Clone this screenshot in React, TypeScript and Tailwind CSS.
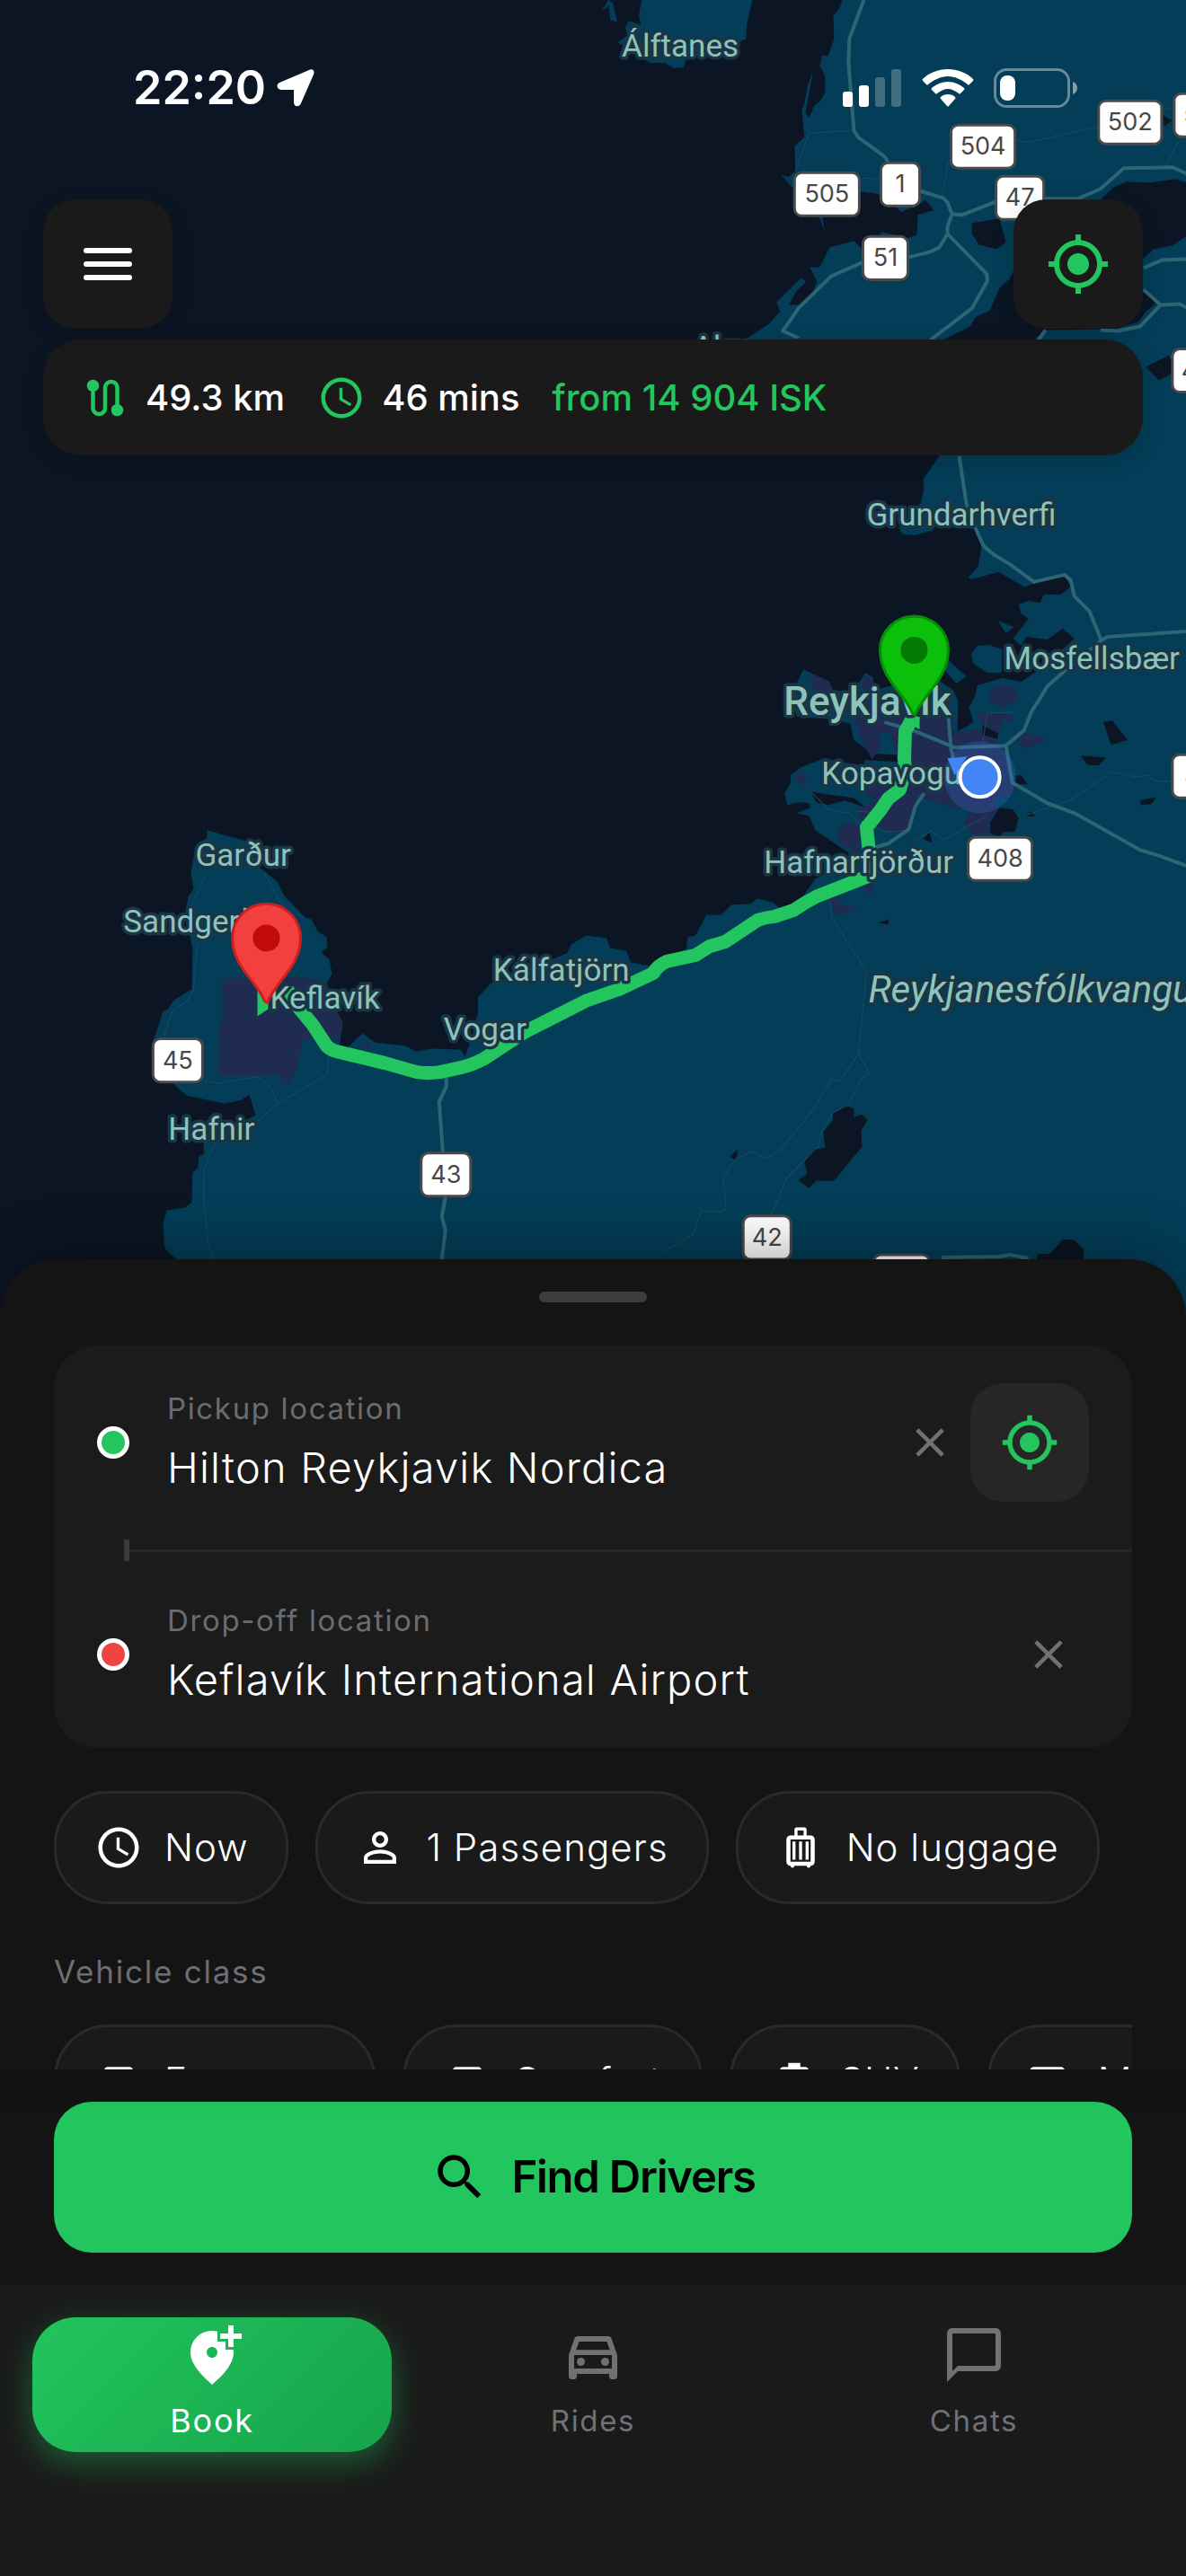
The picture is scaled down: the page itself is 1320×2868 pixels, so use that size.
import type { ReactNode } from "react";
import type { IconType } from "react-icons";
import {
  MdAddLocationAlt,
  MdAirportShuttle,
  MdChatBubbleOutline,
  MdClose,
  MdLocalTaxi,
  MdMyLocation,
  MdOutlineDirectionsCar,
  MdOutlineLuggage,
  MdPersonOutline,
  MdRoute,
  MdSchedule,
  MdSearch,
} from "react-icons/md";

// ---------- Map data ----------

const LAND = [
  // mainland, clockwise from the top
  "M937 0 934 9 927 17 928 43 921 63 915 61 912 73 918 85 918 103 912 113 906 117 900 131 896 125 899 110 905 77 898 97 895 115 892 123 895 152 884 163 885 190 877 197 869 194 912 243 918 258 915 242 957 213 980 216 997 230 1002 236 1022 228 1029 222 1039 234 1021 239 1020 261 1009 265 982 258 959 277 950 268 923 275 912 297 901 297 909 313 904 325 889 339 878 339 885 325 897 313 891 309 864 336 868 346 856 360 833 375 820 390 900 430 1020 410 1051 377 1079 363 1085 353 1101 345 1112 320 1123 310 1128 300 1160 250 1224 222 1239 208 1253 202 1279 203 1308 199 1320 203V0Z",
  "M1320 262 1304 273 1283 277 1272 287 1240 310 1272 323 1286 337 1274 347 1266 358 1240 366 1163 367 1150 378 1100 430 1045 507 1027 533 1028 543 1024 560 1000 587 1004 594 1018 595 1037 590 1041 585 1086 587 1092 608 1088 630 1077 642 1081 644 1111 636 1140 653 1152 647 1184 640 1191 652 1180 661 1161 661 1157 670 1144 668 1133 672 1136 682 1144 688 1127 710 1136 718 1142 708 1165 711 1182 699 1195 710 1175 728 1152 747 1136 758 1115 754 1087 762 1085 773 1078 787 1083 802 1077 807 1065 813 1066 780 1060 767 1039 753 1000 760 974 767 971 753 963 748 948 770 927 767 922 758 894 744 887 758 880 780 887 797 929 800 946 805 950 823 971 838 997 839 999 847 961 845 963 852 917 843 891 853 879 862 880 870 873 882 876 895 889 892 900 893 902 898 886 904 900 907 907 923 929 938 946 950 929 967 907 977 891 1000 870 1012 861 1004 843 999 835 1005 814 1006 803 1017 786 1017 774 1040 765 1042 764 1055 723 1074 702 1070 697 1057 679 1054 675 1043 660 1041 652 1040 636 1050 631 1060 606 1070 547 1093 532 1109 532 1127 526 1150 518 1175 513 1167 480 1166 463 1169 452 1163 417 1159 404 1149 387 1165 378 1163 382 1138 377 1127 364 1093 370 1083 367 1067 358 1059 365 1053 364 1042 354 1035 347 1022 340 1020 316 995 309 980 290 965 274 935 231 923 231 932 219 940 213 970 216 988 210 997 207 1015 215 1055 214 1100 194 1112 187 1123 182 1124 175 1147 170 1160 169 1170 197 1208 208 1218 251 1227 269 1223 278 1217 285 1240 274 1245 227 1270 228 1283 222 1285 221 1298 215 1304 214 1337 206 1343 186 1346 182 1362 184 1388 196 1399V1480H1320Z",
  // islands and peninsulas
  "M714 0H837L831 27 830 43 816 50 763 67 761 75 750 76 740 70 723 70 687 47 698 40 696 30 700 23 713 28 711 17Z",
  "M669 13 677 0 682 3 687 25 679 22 678 6Z",
  "M1080 727 1087 718 1100 717 1115 722 1114 748 1098 748 1083 738Z",
  "M1110 690 1128 697 1119 704Z",
  "M1054 733 1075 752 1064 760 1049 743Z",
];

const WATER = [
  "M1081 248 1112 243 1119 270 1108 277 1089 272 1081 260Z",
  "M1274 408 1300 395 1308 413 1289 423Z",
  "M1293 128 1304 134 1295 140Z",
  "M1227 803 1237 801 1254 823 1236 828Z",
  "M1202 840 1230 842 1222 851 1209 850Z",
  "M1268 890 1286 886 1281 894 1269 895Z",
  "M1139 907 1148 902 1151 908Z",
  "M1101 915 1112 898 1127 900 1133 910 1129 925 1116 925 1112 930 1102 927Z",
  "M1027 933 1034 925 1037 937Z",
  "M1130 862 1136 862 1143 872 1129 872Z",
  "M902 880 925 884 950 887 963 898 940 890 921 895 908 892Z",
  "M1093 807 1110 815 1110 822 1093 817Z",
  "M942 1229 950 1233 950 1242 959 1239 965 1245 958 1257 959 1275 928 1313 908 1313 900 1321 888 1312 898 1305 895 1292 906 1278 918 1276 916 1258 926 1247 927 1237Z",
  "M812 1286 821 1278 819 1290Z",
  "M976 1026 989 1022 988 1028Z",
  "M1154 1394H1168L1182 1378H1194L1206 1389 1204 1402H1154Z",
];

const URBAN = [
  "M985 770 1055 775 1062 815 1085 810 1110 825 1125 850 1130 880 1105 890 1111 902 1100 912 1100 925 1085 930 1072 915 1080 900 1050 895 1020 885 1016 910 1008 930 985 922 958 912 953 902 975 890 960 880 990 865 1000 845 990 815 955 812 950 800 946 772Z",
  "M902 748 923 758 929 775 905 770Z",
  "M958 765 963 750 971 756 972 770Z",
  "M952 805 978 812 980 830 970 844 960 825Z",
  "M882 866 890 858 899 870 892 873Z",
  "M248 1088 290 1089 335 1086 364 1093 377 1127 382 1138 377 1158 362 1150 337 1158 332 1183 324 1205 314 1204 311 1195 243 1196 245 1138 248 1137Z",
  "M934 920 946 913 958 920 955 950 934 937 931 928Z",
  "M1102 765 1127 761 1133 778 1115 787 1101 780Z",
  "M1087 793 1115 793 1127 797 1125 805 1115 798 1110 820 1093 810Z",
  "M1140 815 1165 822 1140 833 1131 825Z",
  "M923 1000 929 995 938 1007 959 1008 944 1014 929 1017Z",
  "M958 985 972 978 970 996Z",
  "M398 1164 417 1156 410 1166Z",
];

const HIGHWAYS = [
  "M961 0 945 43 944 70 950 145 955 153 984 174 1004 205 1022 212 1049 220 1054 225 1059 238 1054 252 1054 260 1098 305 1098 313 1081 343 1035 378",
  "M1059 238 1070 239 1108 224 1163 221 1199 221 1224 210 1250 187 1304 186 1320 193",
  "M1054 260 1045 275 1035 280 1011 286 959 292 925 307 889 342 871 368 889 376",
  "M1272 298 1293 289 1320 288M1272 322 1291 339 1268 363 1243 368 1224 367M1291 339 1312 338 1320 342M1163 367 1155 378",
  "M1067 507 1075 560 1085 587 1094 607 1106 617 1123 627 1150 647 1184 639 1191 645 1195 663 1212 680 1225 712 1232 708 1320 702",
  "M1225 712 1182 748 1165 763 1159 773 1148 790 1139 812 1119 829 1062 831 1018 813 984 803",
  "M1119 829 1126 870 1165 893 1197 905 1268 945 1291 952 1320 963",
  "M1055 797 1058 833 1064 860M1028 882 1018 897 1011 922 988 938 974 942",
  "M497 1198V1208L489 1225 493 1280 496 1330 492 1353 496 1368 492 1400",
  "M1047 1398 1112 1397 1123 1395 1144 1399",
];

const LANES = [
  "M885 190 900 148 950 145M1130 156 1144 158 1221 141M1293 122 1310 118M1055 180 1048 218M1312 156 1296 184M961 198 979 199",
  "M231 970 210 1015M294 970 316 1010M221 1040 216 1100 210 1112 192 1125 183 1152M228 1202 244 1204 288 1197 304 1212 309 1228 285 1248M366 1165 365 1194 309 1228M240 1270 228 1300 227 1330 232 1380 238 1400",
  "M923 1000 925 1020 964 1080 955 1172 967 1193 957 1201 944 1228 927 1237 914 1258 911 1274 875 1310 866 1333 856 1354",
  "M955 1172 934 1202 925 1200 905 1233 868 1279 851 1288 838 1280 819 1288 805 1310 808 1344 803 1347 780 1347 771 1373 733 1394",
  "M1139 907 1190 890 1220 870 1236 858 1265 864 1275 862 1285 868 1304 869M1096 908 1050 934 1036 924 1018 934M902 880 922 900 944 904 958 918",
  "M953 902 970 903M955 912 985 925 1011 923M1093 828 1098 793 1127 792",
];

const ROUTE =
  "M1017 795 1007 813 1006 843 1007 858 1001 878 988 888 980 900 964 920 967 947 969 973 959 977 908 997Q896 1003 883 1012L862 1019Q852 1020 843 1023L828 1033 807 1047 790 1052 774 1062 742 1069Q732 1073 727 1082L689 1100 660 1110Q652 1112 644 1117L585 1147 539 1177Q526 1184 513 1187L490 1192Q476 1194 464 1192L429 1182 375 1169Q368 1167 364 1163L349 1140 335 1123 320 1100";

type Place = { name: string; x: number; y: number };

const places: Place[] = [
  { name: "Álftanes", x: 692, y: 63 },
  { name: "Akranes", x: 771, y: 398 },
  { name: "Grundarhverfi", x: 964, y: 584 },
  { name: "Mosfellsbær", x: 1117, y: 744 },
  { name: "Kopavogur", x: 914, y: 872 },
  { name: "Hafnarfjörður", x: 850, y: 971 },
  { name: "Garður", x: 218, y: 963 },
  { name: "Sandgerði", x: 138, y: 1037 },
  { name: "Keflavík", x: 301, y: 1121 },
  { name: "Vogar", x: 494, y: 1156 },
  { name: "Kálfatjörn", x: 549, y: 1091 },
  { name: "Hafnir", x: 188, y: 1267 },
];

const shields = [
  { no: "504", x: 1057, y: 138, w: 73 },
  { no: "502", x: 1221, y: 111, w: 72 },
  { no: "503", x: 1305, y: 103, w: 73 },
  { no: "505", x: 883, y: 191, w: 74 },
  { no: "1", x: 979, y: 180, w: 45 },
  { no: "47", x: 1107, y: 195, w: 55 },
  { no: "51", x: 959, y: 262, w: 52 },
  { no: "48", x: 1303, y: 387, w: 56 },
  { no: "431", x: 1303, y: 838, w: 74 },
  { no: "408", x: 1076, y: 930, w: 73 },
  { no: "45", x: 170, y: 1154, w: 57 },
  { no: "43", x: 468, y: 1281, w: 57 },
  { no: "42", x: 826, y: 1351, w: 55 },
  { no: "427", x: 971, y: 1394, w: 64 },
];

function Pin({ x, y, fill, edge, dot }: { x: number; y: number; fill: string; edge: string; dot: string }) {
  return (
    <g transform={`translate(${x} ${y})`}>
      <path
        d="M0-38C21-38 38-21 38 0 38 14 33 25 25 36 14 51 5 61 2 70Q0 73-2 70C-5 61-14 51-25 36-33 25-38 14-38 0-38-21-21-38 0-38Z"
        fill={fill}
        stroke={edge}
        strokeWidth="3"
      />
      <circle r="15" fill={dot} />
    </g>
  );
}

function RouteMap() {
  return (
    <svg
      className="absolute inset-0 h-full w-full font-[Roboto,sans-serif]"
      viewBox="0 0 1320 1464"
      preserveAspectRatio="xMidYMin slice"
      role="img"
      aria-label="Route from Reykjavík to Keflavík"
    >
      <rect width="1320" height="1480" fill="#0c1523" />
      <path d={LAND.join("")} fill="#033d57" />
      <path d={URBAN.join("")} fill="#1f2b50" />
      <path d={WATER.join("")} fill="#0c1523" />
      <path d={LANES.join("")} fill="none" stroke="#1a4a64" strokeWidth="1" />
      <path d={HIGHWAYS.join("")} fill="none" stroke="#2c6675" strokeWidth="4" strokeLinejoin="round" />

      <path d={ROUTE} fill="none" stroke="#22c55e" strokeWidth="15" strokeLinejoin="round" />
      <path d="M287 1101H299V1122L287 1130ZM1013 797H1023V811L1013 806Z" fill="#22c55e" />

      {/* Place names */}
      <g fill="#8ec3b9" stroke="#1a3646" strokeWidth="7" strokeLinejoin="round" paintOrder="stroke" fontSize="35">
        {places.map((p) => (
          <text key={p.name} x={p.x} y={p.y}>
            {p.name}
          </text>
        ))}
        <text x="872" y="795" fontSize="44" fontWeight="500">
          Reykjavík
        </text>
        <text x="966" y="1114" fontSize="42" fontStyle="italic">
          Reykjanesfólkvangur
        </text>
      </g>

      {/* Road numbers */}
      {shields.map((s) => (
        <g key={s.no} className="font-[Inter,sans-serif]">
          <rect x={s.x + 1} y={s.y + 1} width={s.w - 2} height="48" rx="8" fill="#fff" stroke="#4a4a4a" strokeWidth="3" />
          <text x={s.x + s.w / 2} y={s.y + 34} textAnchor="middle" fontSize="27" fill="#484848">
            {s.no}
          </text>
        </g>
      ))}

      {/* Current position */}
      <circle cx="1090" cy="864" r="40" fill="#4285f4" fillOpacity="0.22" />
      <path d="M1054 843 1076 841 1062 862Z" fill="#4285f4" />
      <circle cx="1090" cy="864" r="22" fill="#4285f4" stroke="#fff" strokeWidth="4" />

      <Pin x={1017} y={723} fill="#0bbf0b" edge="#078c07" dot="#047a04" />
      <Pin x={297} y={1043} fill="#f43f3f" edge="#cc1f1f" dot="#c20c0c" />
    </svg>
  );
}

// ---------- Status bar ----------

function StatusBar() {
  return (
    <div className="flex h-[195px] items-center justify-between pr-[120px] pl-[148px] text-white">
      <div className="flex items-center gap-3">
        <span className="text-[52px] leading-none font-semibold">22:20</span>
        <svg className="h-[42px] w-[42px]" viewBox="0 0 42 42" fill="currentColor">
          <path d="M36 1C39-1 43 1 41 6L27 38C25 43 19 42 19 37V23H5C0 23-1 17 3 15Z" />
        </svg>
      </div>
      <div className="flex items-center gap-[22px]">
        <svg className="h-[42px] w-[66px]" viewBox="0 0 66 42" fill="currentColor">
          <rect y="25" width="11" height="17" rx="3" />
          <rect x="18" y="18" width="11" height="24" rx="3" />
          <rect x="36" y="9" width="11" height="33" rx="3" opacity="0.25" />
          <rect x="54" width="11" height="42" rx="3" opacity="0.25" />
        </svg>
        <svg className="h-[42px] w-[58px]" viewBox="0 0 58 42" fill="currentColor">
          <path d="M29 0C40 0 50 4 57 11Q58 12 57 13L53 17Q52 18 51 17C45 12 37 8 29 8S13 12 7 17Q6 18 5 17L1 13Q0 12 1 11C8 4 18 0 29 0Z" />
          <path d="M29 14C36 14 42 17 47 21Q48 22 47 23L43 27Q42 28 41 27C37 24 33 22 29 22S21 24 17 27Q16 28 15 27L11 23Q10 22 11 21C16 17 22 14 29 14Z" />
          <path d="M29 28C32 28 35 29 37 31Q38 32 37 33L30 41Q29 42 28 41L21 33Q20 32 21 31C23 29 26 28 29 28Z" />
        </svg>
        <svg className="h-[44px] w-[94px]" viewBox="0 0 94 44">
          <rect x="1.5" y="1.5" width="82" height="41" rx="13" fill="none" stroke="#fff" strokeOpacity="0.4" strokeWidth="3" />
          <path d="M88 15Q93 17 93 22T88 29Z" fill="#fff" fillOpacity="0.5" />
          <rect x="7" y="8" width="17" height="28" rx="8" fill="#fff" />
        </svg>
      </div>
    </div>
  );
}

// ---------- Overlay controls ----------

function MapButton({ label, children }: { label: string; children: ReactNode }) {
  return (
    <button
      type="button"
      aria-label={label}
      className="flex size-36 items-center justify-center rounded-[36px] bg-[#1a1a1a] shadow-[0_6px_24px_rgba(0,0,0,0.15)]"
    >
      {children}
    </button>
  );
}

function TripSummary() {
  return (
    <div className="mx-12 mt-3 flex h-[129px] items-center rounded-[42px] bg-[#1a1a1a] px-[42px] text-[40px] leading-none font-medium text-white shadow-[0_6px_24px_rgba(0,0,0,0.15)]">
      <MdRoute className="mr-[18px] size-[54px] text-[#22c55e]" />
      <span>49.3 km</span>
      <MdSchedule className="mr-[18px] ml-9 size-[54px] text-[#22c55e]" />
      <span>46 mins</span>
      <span className="ml-9 text-[#22c55e]">from 14 904 ISK</span>
    </div>
  );
}

// ---------- Booking sheet ----------

function LocationRow({
  id,
  label,
  value,
  dotClass,
  children,
}: {
  id: string;
  label: string;
  value: string;
  dotClass: string;
  children?: ReactNode;
}) {
  return (
    <div className="flex items-center px-12 py-[42px]">
      <span className={`size-9 shrink-0 rounded-full border-[5px] border-white ${dotClass}`} />
      <div className="ml-[42px] flex min-w-0 flex-1 flex-col gap-2">
        <label htmlFor={id} className="text-[33px] leading-[48px] tracking-wider text-[#6c6c70]">
          {label}
        </label>
        <input
          id={id}
          type="text"
          defaultValue={value}
          className="h-[68px] w-full bg-transparent p-0 text-[47px] leading-[68px] font-light tracking-wide text-white outline-none"
        />
      </div>
      <button type="button" aria-label={`Clear ${label.toLowerCase()}`} className="flex w-[90px] justify-center text-[#717175]">
        <MdClose className="size-[54px]" />
      </button>
      {children}
    </div>
  );
}

function Chip({ icon: Icon, label }: { icon: IconType; label: string }) {
  return (
    <button
      type="button"
      className="flex h-[126px] shrink-0 items-center gap-6 rounded-[60px] border-3 border-[#2a2a2a] bg-[#1a1a1a] px-[42px] text-[42px] leading-none font-light tracking-wide text-white"
    >
      <Icon className="size-[54px]" />
      {label}
    </button>
  );
}

const tripOptions = [
  { icon: MdSchedule, label: "Now" },
  { icon: MdPersonOutline, label: "1 Passengers" },
  { icon: MdOutlineLuggage, label: "No luggage" },
];

const vehicleClasses = [
  { icon: MdOutlineDirectionsCar, label: "Economy" },
  { icon: MdOutlineDirectionsCar, label: "Comfort" },
  { icon: MdLocalTaxi, label: "SUV" },
  { icon: MdAirportShuttle, label: "Minivan" },
];

function BookingSheet() {
  return (
    <section className="relative -mt-16 rounded-t-[64px] bg-[#141414] px-[60px] pt-9 shadow-[0_-12px_60px_rgba(0,0,0,0.3)]">
      <div className="mx-auto mb-12 h-3 w-[120px] rounded-full bg-[#3c3c3c]" />

      <div className="rounded-[48px] bg-[#1b1b1b]">
        <LocationRow id="pickup" label="Pickup location" value="Hilton Reykjavik Nordica" dotClass="bg-[#22c55e]">
          <button
            type="button"
            aria-label="Use current location"
            className="flex size-[132px] items-center justify-center rounded-[36px] bg-[#262626]"
          >
            <MdMyLocation className="size-[66px] text-[#22c55e]" />
          </button>
        </LocationRow>
        <div className="ml-[78px] flex h-6 items-center">
          <div className="h-6 w-[6px] bg-[#3a3a3a]" />
          <div className="h-[3px] flex-1 bg-[#272727]" />
        </div>
        <LocationRow id="dropoff" label="Drop-off location" value="Keflavík International Airport" dotClass="bg-[#ef4444]" />
      </div>

      <div className="mt-12 flex gap-[30px] overflow-hidden">
        {tripOptions.map((o) => (
          <Chip key={o.label} {...o} />
        ))}
      </div>

      <h2 className="mt-12 mb-8 text-[35px] leading-[54px] tracking-wider text-[#6e6e72]">Vehicle class</h2>
      <div className="flex h-[50px] items-start gap-[30px] overflow-hidden">
        {vehicleClasses.map((v) => (
          <Chip key={v.label} {...v} />
        ))}
      </div>
    </section>
  );
}

// ---------- Bottom navigation ----------

const tabs = [
  { icon: MdAddLocationAlt, label: "Book", active: true },
  { icon: MdOutlineDirectionsCar, label: "Rides", active: false },
  { icon: MdChatBubbleOutline, label: "Chats", active: false },
];

function TabBar() {
  return (
    <nav className="grid grid-cols-3 gap-6 bg-[#1a1a1a] px-9 pt-9 pb-[138px]">
      {tabs.map(({ icon: Icon, label, active }) => (
        <a
          key={label}
          href={`#${label.toLowerCase()}`}
          aria-current={active ? "page" : undefined}
          className={
            active
              ? "flex h-[150px] flex-col items-center rounded-[48px] bg-linear-135 from-[#22c55e] to-[#16a34a] pt-[6px] text-[36px] leading-[74px] tracking-wider text-white shadow-[0_12px_36px_rgba(34,197,94,0.4)]"
              : "flex h-[150px] flex-col items-center pt-[6px] text-[33px] leading-[74px] tracking-wider text-[#717175]"
          }
        >
          <Icon className="size-[72px] shrink-0" />
          {label}
        </a>
      ))}
    </nav>
  );
}

export default function App() {
  return (
    <main className="flex min-h-screen flex-col bg-[#141414] font-[Inter,sans-serif]">
      <section className="relative flex-1 overflow-hidden">
        <RouteMap />
        <div className="relative">
          <StatusBar />
          <div className="mt-[27px] flex justify-between px-12">
            <MapButton label="Open menu">
              <svg className="size-[72px] text-white" viewBox="0 0 24 24" stroke="currentColor" strokeWidth="2" strokeLinecap="round">
                <path d="M4 7h16M4 12h16M4 17h16" />
              </svg>
            </MapButton>
            <MapButton label="Center on my location">
              <MdMyLocation className="size-[72px] text-[#22c55e]" />
            </MapButton>
          </div>
          <TripSummary />
        </div>
      </section>

      <BookingSheet />

      <div className="bg-[#141414] px-[60px] py-9">
        <button
          type="button"
          className="flex h-[168px] w-full items-center justify-center gap-6 rounded-[42px] bg-[#22c55e] text-[49px] font-semibold tracking-tight text-black"
        >
          <MdSearch className="size-[66px]" />
          Find Drivers
        </button>
      </div>

      <TabBar />
    </main>
  );
}
